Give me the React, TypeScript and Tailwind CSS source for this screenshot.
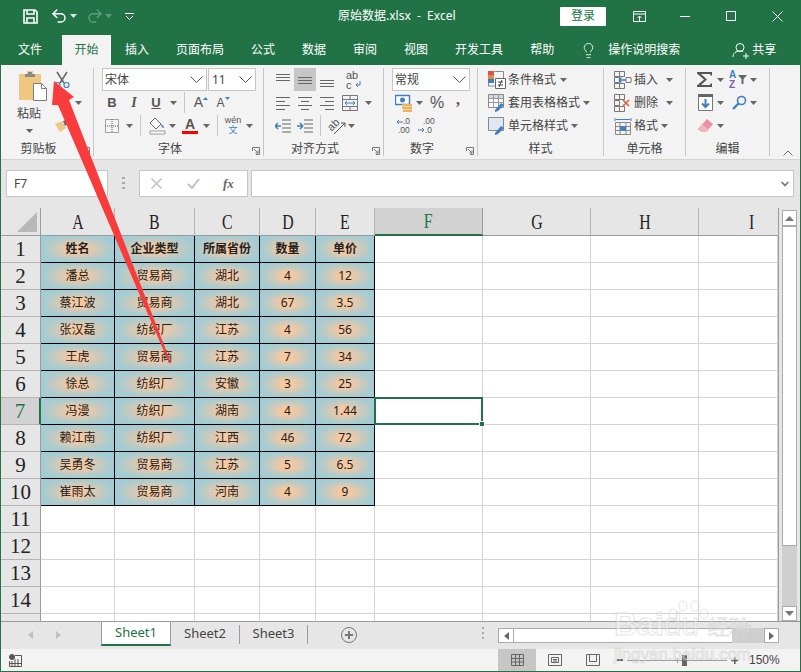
import React from "react";
import { Lightbulb, Redo2, Undo2 } from "lucide-react";

const GRAY = "#666666";
const BLUE = "#3f7fbf";

const Caret = ({ color = GRAY }: { color?: string }) => (
  <svg width="7" height="4" viewBox="0 0 7 4" className="shrink-0">
    <path d="M0 0h7L3.5 4z" fill={color} />
  </svg>
);

const Chevron = () => (
  <svg width="13" height="7" viewBox="0 0 13 7" fill="none" stroke="#555" strokeWidth="1">
    <path d="M.5.5l6 6 6-6" />
  </svg>
);

const Slot = ({ w, children, className = "" }: { w: string; children?: React.ReactNode; className?: string }) => (
  <span className={`flex h-[23px] shrink-0 items-center justify-center ${w} ${className}`}>{children}</span>
);

const Sep = ({ ml }: { ml: string }) => <span className={`h-[21px] w-px shrink-0 bg-[#c6c6c6] ${ml}`} />;

const Row = ({ children }: { children: React.ReactNode }) => <div className="flex h-[23px] items-center">{children}</div>;

const Launcher = () => (
  <svg width="8" height="8" viewBox="0 0 8 8" fill="none" stroke="#777" className="absolute right-[3px] top-[10px]">
    <path d="M.5 4V.5H7.5V7.5H4M2 2l4 4M6 3.5V6H3.5" />
  </svg>
);

function Group(props: { w: string; label: string; launcher?: boolean; children: React.ReactNode }) {
  return (
    <div className={`flex shrink-0 flex-col pt-[3px] ${props.w}`}>
      <div className="h-[69px]">{props.children}</div>
      <div className={`relative h-[22px] text-center text-[12px] leading-[23px] text-[#444] ${props.launcher ? "pr-[17px]" : ""}`}>
        {props.label}
        {props.launcher && <Launcher />}
      </div>
    </div>
  );
}

const GroupLine = () => <span className="my-[3px] w-px shrink-0 bg-[#c6c6c6]" />;

const Lines = ({ rows }: { rows: [number, number, number][] }) => (
  <svg width="16" height="16" viewBox="0 0 16 16" stroke={GRAY}>
    {rows.map((r, i) => (
      <path key={i} d={`M${r[0]} ${r[2] + 0.5}H${r[1]}`} />
    ))}
  </svg>
);

const SaveIcon = () => (
  <svg width="15" height="15" viewBox="0 0 15 15" fill="none" stroke="#fff" strokeWidth="1.6">
    <path d="M1 1h11l2 2v11H1z" />
    <path d="M4 1v4h7V1M4 14V9h7v5" />
  </svg>
);

const PasteIcon = () => (
  <svg width="30" height="31" viewBox="0 0 30 31">
    <path d="M1 4h8V1h6v3h8v26H1z" fill="#efc77e" />
    <path d="M7 4h10v3H7z" fill="#8a8a8a" />
    <path d="M10 2h4v3h-4z" fill="#8a8a8a" />
    <path d="M15.500 13.500h8l5 5v12h-13z" fill="#fff" stroke="#7c7c7c" />
    <path d="M23.500 13.500v5h5" fill="none" stroke="#7c7c7c" />
  </svg>
);

const CutIcon = () => (
  <svg width="16" height="18" viewBox="0 0 16 18" fill="none">
    <path d="M3 1l7 11M13 1L6 12" stroke="#6a6a6a" strokeWidth="1.6" />
    <circle cx="3.500" cy="14" r="2.500" stroke={BLUE} strokeWidth="1.2" />
    <circle cx="12.500" cy="14" r="2.500" stroke={BLUE} strokeWidth="1.2" />
  </svg>
);

const PainterIcon = () => (
  <svg width="16" height="14" viewBox="0 0 16 14">
    <path d="M1 5l7-3 4 7-6 4z" fill="#eec88a" />
    <path d="M9 2l5-2 2 3-5 4z" fill="#666" />
  </svg>
);

const BorderIcon = () => (
  <svg width="14" height="14" viewBox="0 0 14 14" fill="none" stroke="#555" strokeDasharray="1 1">
    <path d="M.5.5h13v13H.5zM7 0v14M0 7h14" />
  </svg>
);

const FillIcon = () => (
  <svg width="17" height="18" viewBox="0 0 17 18">
    <path d="M6 1l6 6-5 5-6-6z" fill="#fff" stroke="#666" />
    <path d="M12 7c2 1 3 3 3 4-2 0-3-2-3-4z" fill={BLUE} />
    <path d="M1 14h15v3H1z" fill="#fff" stroke="#999" />
  </svg>
);

const WrapIcon = () => (
  <svg width="20" height="20" viewBox="0 0 20 20" fill="#555" fontFamily="Liberation Sans" fontSize="11">
    <text x="1" y="9">ab</text>
    <text x="1" y="19">c</text>
    <path d="M15 11v4h-4M11 15l2-2M11 15l2 2" fill="none" stroke={BLUE} />
  </svg>
);

const MergeIcon = () => (
  <svg width="16" height="16" viewBox="0 0 16 16" fill="none">
    <path d="M.5.500h15v15H.5zM0 4.500h16M0 11.500h16M8 0v4M8 12v4" stroke="#777" />
    <path d="M3 8h10M3 8l2-2M3 8l2 2M13 8l-2-2M13 8l-2 2" stroke={BLUE} />
  </svg>
);

const IndentIcon = () => (
  <svg width="16" height="14" viewBox="0 0 16 14" fill="none">
    <path d="M7 1h9M7 5h9M7 9h9M7 13h9" stroke={GRAY} />
    <path d="M0 7h6M0 7l3-3M0 7l3 3" stroke={BLUE} strokeWidth="1.500" />
  </svg>
);

const OrientIcon = () => (
  <svg width="20" height="20" viewBox="0 0 20 20" fontFamily="Liberation Sans" fontSize="11" fill="#555">
    <text x="2" y="13" transform="rotate(-45 7 10)">ab</text>
    <path d="M8 18L19 7M15 7h4v4" fill="none" stroke="#555" />
  </svg>
);

const CurrencyIcon = () => (
  <svg width="18" height="18" viewBox="0 0 18 18">
    <path d="M.5 1.500h14v9H.5z" fill="#fff" stroke={BLUE} strokeWidth="1.400" />
    <circle cx="7.500" cy="6" r="2.500" fill={BLUE} />
    <path d="M7 10h10v2.500H7zM7 13h10v2H7zM8 15.500h9V18H8z" fill="#e9b45f" />
  </svg>
);

const DecIcon = ({ top, bottom, left }: { top: string; bottom: string; left?: boolean }) => (
  <svg width="20" height="18" viewBox="0 0 20 18" fontFamily="Liberation Sans" fontSize="8.500" fill="#555">
    <text x={left ? 8 : 6} y="7">{top}</text>
    <text x={left ? 3 : 8} y="16">{bottom}</text>
    {left ? (
      <path d="M2 5h6M2 5l2-2M2 5l2 2" fill="none" stroke={BLUE} />
    ) : (
      <path d="M1 13h6M7 13l-2-2M7 13l-2 2" fill="none" stroke={BLUE} />
    )}
  </svg>
);

const CondIcon = () => (
  <svg width="18" height="18" viewBox="0 0 18 18">
    <path d="M0 0h6v4H0z" fill="#d9534a" />
    <path d="M0 4h6v4H0z" fill="#e58a3a" />
    <path d="M0 8h6v4H0z" fill={BLUE} />
    <path d="M6.500.5h9v7M.5 12v3h6" fill="none" stroke="#888" />
    <path d="M7.500 7.500h10v10h-10z" fill="#fff" stroke="#666" />
    <path d="M10 11h5M10 14h5M14 9l-3 7" stroke="#444" fill="none" />
  </svg>
);

const TableIcon = ({ plain }: { plain?: boolean }) => (
  <svg width="18" height="18" viewBox="0 0 18 18" fill="none">
    <path d="M.5.500h15v13H.5z" fill={plain ? "#dfe7f2" : "#fff"} stroke="#888" />
    {!plain && <path d="M1 1h14v3.500H1z" fill="#cfd8e4" />}
    {!plain && <path d="M5.500 1v13M10.500 1v13M1 4.500h14M1 8.500h14" stroke="#999" />}
    <path d="M7 16l6-7 3 2-6 6-3 1z" fill={BLUE} />
  </svg>
);

const CellBoxes = ({ children }: { children?: React.ReactNode }) => (
  <svg width="18" height="18" viewBox="0 0 18 18" fill="none">
    <path d="M.5.500h5v5h-5zM5.500.5h5v5h-5zM.5 12.500h5v5h-5zM5.500 12.500h5v5h-5zM.5 6.500h5v5h-5z" stroke="#777" />
    {children}
  </svg>
);

const FormatIcon = () => (
  <svg width="18" height="18" viewBox="0 0 18 18" fill="none">
    <path d="M1 1v3M17 1v3M2 2.500h14" stroke={BLUE} />
    <path d="M1.500 5.500h15v12h-15zM6 6v11M12 6v11M2 9.500h14M2 13.500h14" stroke="#888" />
    <path d="M6 9.500h6v4H6z" fill={BLUE} />
  </svg>
);

const SigmaIcon = () => (
  <svg width="16" height="15" viewBox="0 0 16 15" fill="#555">
    <path d="M0 0h15v3.500h-1.500L13 2H4l6 5.500L4 13h9l.5-1.500H15V15H0v-1.500L7 7.500 0 1.500z" />
  </svg>
);

const SortIcon = () => (
  <svg width="20" height="19" viewBox="0 0 20 19" fontFamily="Liberation Sans" fontWeight="700" fontSize="10">
    <text x="0" y="8" fill={BLUE}>A</text>
    <text x="0" y="18" fill="#8a57b5">Z</text>
    <path d="M9 5h9l-3.500 4v5h-2V9z" fill="#666" />
  </svg>
);

const FillDownIcon = () => (
  <svg width="15" height="17" viewBox="0 0 15 17">
    <path d="M.5.500h14v16H.5z" fill="#fff" stroke="#777" />
    <path d="M0 0h15v3H0z" fill="#666" />
    <path d="M7.500 5v8M4 9.500l3.500 3.500L11 9.500" fill="none" stroke={BLUE} strokeWidth="2" />
  </svg>
);

const SearchIcon = () => (
  <svg width="15" height="15" viewBox="0 0 15 15" fill="none" stroke={BLUE}>
    <circle cx="9.500" cy="5.500" r="4" strokeWidth="1.600" />
    <path d="M6.500 8.500L1 14" strokeWidth="2.400" />
  </svg>
);

const EraserIcon = () => (
  <svg width="15" height="14" viewBox="0 0 15 14">
    <path d="M9 0l6 5-6 7-3 1-4-1-2-2z" fill="#ec8f9e" />
    <path d="M0 10l4-5 6 5-3 3-4-.5z" fill="#f3b3bd" />
  </svg>
);

const colWidths = ["w-[40px]", "w-[74px]", "w-[80px]", "w-[65px]", "w-[56px]", "w-[59px]", "w-[108px]", "w-[108px]", "w-[108px]", "w-[79px]"];
const colNames = ["A", "B", "C", "D", "E", "F", "G", "H", "I"];

const tableRows = [
  ["姓名", "企业类型", "所属省份", "数量", "单价"],
  ["潘总", "贸易商", "湖北", "4", "12"],
  ["蔡江波", "贸易商", "湖北", "67", "3.5"],
  ["张汉磊", "纺织厂", "江苏", "4", "56"],
  ["王虎", "贸易商", "江苏", "7", "34"],
  ["徐总", "纺织厂", "安徽", "3", "25"],
  ["冯漫", "纺织厂", "湖南", "4", "1.44"],
  ["赖江南", "纺织厂", "江西", "46", "72"],
  ["吴勇冬", "贸易商", "江苏", "5", "6.5"],
  ["崔雨太", "贸易商", "河南", "4", "9"],
];

const rowNumbers = [1, 2, 3, 4, 5, 6, 7, 8, 9, 10, 11, 12, 13, 14, 15];

function SheetRow({ n }: { n: number }) {
  const data = tableRows[n - 1];
  const selected = n === 7;
  return (
    <div className="flex h-[27px] shrink-0">
      <div
        className={`flex items-center justify-center border-b border-b-[#b4b4b4] font-['Liberation_Serif',serif] text-[21px] leading-none ${colWidths[0]} ${
          selected ? "border-r-2 border-r-[#217346] bg-[#d2d2d2] text-[#217346]" : "border-r border-r-[#9b9b9b] bg-[#e6e6e6] text-[#222]"
        }`}
      >
        {n < 15 ? n : ""}
      </div>
      {colNames.map((c, i) => {
        const text = data ? data[i] : undefined;
        if (text !== undefined) {
          return (
            <div
              key={c}
              className={`flex items-center justify-center border-b border-r border-black bg-[#f8c8a0] bg-[linear-gradient(90deg,#9fccd6,#9fccd600_42%,#9fccd600_58%,#9fccd6),linear-gradient(180deg,#9fccd6,#9fccd600_38%,#9fccd600_62%,#9fccd6)] text-[12px] text-[#222] ${colWidths[i + 1]} ${
                n === 1 ? "font-bold" : ""
              }`}
            >
              {text}
            </div>
          );
        }
        return (
          <div key={c} className={`relative border-b border-r border-[#d4d4d4] bg-white ${colWidths[i + 1]}`}>
            {selected && c === "F" && (
              <div className="absolute -left-px -top-px bottom-[-1px] right-[-1px] z-10 border-2 border-[#217346]">
                <span className="absolute -bottom-[4px] -right-[4px] h-[6px] w-[6px] border border-white bg-[#217346]" />
              </div>
            )}
          </div>
        );
      })}
    </div>
  );
}

export default function App() {
  return (
    <div className="relative flex h-[672px] w-[801px] flex-col overflow-hidden border-x border-b border-[#217346] bg-[#f3f3f3] font-['Noto_Sans','Noto_Sans_CJK_SC',sans-serif]">
      {/* title bar */}
      <div className="flex h-[32px] shrink-0 items-center bg-[#217346] text-white">
        <span className="ml-[22px] w-[15px]"><SaveIcon /></span>
        <Undo2 size={18} strokeWidth={2} className="ml-[12px]" />
        <span className="ml-[2px]"><Caret color="#d8e8df" /></span>
        <Redo2 size={18} strokeWidth={2} color="#5d9c7c" className="ml-[9px]" />
        <span className="ml-[1px]"><Caret color="#5d9c7c" /></span>
        <svg width="9" height="7" viewBox="0 0 9 7" className="ml-[13px]" fill="none" stroke="#fff">
          <path d="M0 .5h9M1 3l3.500 3.500L8 3" />
        </svg>
        <span className="ml-[204px] w-[122px] shrink-0 whitespace-nowrap text-[12px]">原始数据.xlsx&nbsp; -&nbsp; Excel</span>
        <span className="ml-[100px] flex h-[19px] w-[46px] shrink-0 items-center justify-center rounded-[1px] bg-white text-[12px] text-[#217346]">登录</span>
        <span className="ml-[10px] flex w-[46px] shrink-0 justify-center">
          <svg width="13" height="11" viewBox="0 0 13 11" fill="none" stroke="#fff">
            <path d="M.5.500h12v10H.5zM0 3h13M6.500 10V5M4.500 7l2-2 2 2" />
          </svg>
        </span>
        <span className="flex w-[46px] shrink-0 justify-center"><span className="h-px w-[10px] bg-white" /></span>
        <span className="flex w-[46px] shrink-0 justify-center"><span className="h-[10px] w-[10px] border border-white" /></span>
        <span className="flex w-[46px] shrink-0 justify-center">
          <svg width="11" height="11" viewBox="0 0 11 11" stroke="#fff"><path d="M.5.5l10 10M10.500.5l-10 10" /></svg>
        </span>
      </div>

      {/* tabs */}
      <div className="flex h-[33px] shrink-0 items-end gap-px bg-[#217346] pl-[4px] text-[12px] leading-[29px] text-white">
        <span className="mr-[6px] h-[30px] px-[13px]">文件</span>
        <span className="h-[30px] w-[49px] bg-[#f3f3f3] text-center text-[#217346]">开始</span>
        <span className="h-[30px] px-[13px]">插入</span>
        <span className="h-[30px] px-[13px]">页面布局</span>
        <span className="h-[30px] px-[13px]">公式</span>
        <span className="h-[30px] px-[13px]">数据</span>
        <span className="h-[30px] px-[13px]">审阅</span>
        <span className="h-[30px] px-[13px]">视图</span>
        <span className="h-[30px] px-[13px]">开发工具</span>
        <span className="h-[30px] px-[13px]">帮助</span>
        <Lightbulb size={17} strokeWidth={1.2} className="mb-[6px] ml-[12px]" />
        <span className="ml-[10px] h-[30px]">操作说明搜索</span>
        <svg width="17" height="17" viewBox="0 0 17 17" fill="none" stroke="#fff" className="mb-[6px] ml-[51px]">
          <circle cx="8" cy="5.500" r="4" />
          <path d="M1 15c0-4 3-6 7-6 1 0 2 .2 3 .6M11 14h6M14 11v6" />
        </svg>
        <span className="ml-[2px] h-[30px]">共享</span>
      </div>

      {/* ribbon */}
      <div className="flex h-[95px] shrink-0 border-b border-[#d4d4d4] text-[#444]">
        <Group w="w-[92px]" label="剪贴板" launcher>
          <div className="flex">
            <div className="ml-[6px] flex w-[44px] flex-col items-center pt-[2px]">
              <span className="ml-[7px] block h-[33px]"><PasteIcon /></span>
              <span className="mt-[2px] text-[12px] leading-[18px]">粘贴</span>
              <span className="mt-[6px]"><Caret /></span>
            </div>
            <div className="flex flex-col">
              <Slot w="w-[22px]"><CutIcon /></Slot>
              <Row><Slot w="w-[22px]" /><span className="ml-[2px]"><Caret /></span></Row>
              <Slot w="w-[22px]"><PainterIcon /></Slot>
            </div>
          </div>
        </Group>
        <GroupLine />
        <Group w="w-[169px]" label="字体" launcher>
          <Row>
            <div className="ml-[8px] flex h-[23px] w-[105px] items-center justify-between border border-[#c6c6c6] bg-white pl-[2px] pr-[3px] text-[12px]">
              宋体<Chevron />
            </div>
            <div className="ml-px flex h-[23px] w-[48px] items-center justify-between border border-[#c6c6c6] bg-white pl-[3px] pr-[3px] text-[12px]">
              11<Chevron />
            </div>
          </Row>
          <Row>
            <Slot w="w-[22px]" className="ml-[7px] font-['Liberation_Sans',sans-serif] text-[13px] font-bold text-[#555]">B</Slot>
            <Slot w="w-[22px]" className="font-['Liberation_Serif',serif] text-[14px] font-bold italic text-[#555]">I</Slot>
            <Slot w="w-[22px]" className="font-['Liberation_Sans',sans-serif] text-[13px] font-bold text-[#555] underline">U</Slot>
            <Slot w="w-[12px]"><Caret /></Slot>
            <Sep ml="ml-[5px]" />
            <Slot w="w-[22px]" className="ml-[5px] font-['Liberation_Sans',sans-serif] text-[14px] text-[#555]">
              A<svg width="5" height="3" viewBox="0 0 5 3" className="mb-[9px]"><path d="M0 3h5L2.500 0z" fill={BLUE} /></svg>
            </Slot>
            <Slot w="w-[22px]" className="font-['Liberation_Sans',sans-serif] text-[12px] text-[#555]">
              A<svg width="5" height="3" viewBox="0 0 5 3" className="mb-[9px]"><path d="M0 0h5L2.500 3z" fill={BLUE} /></svg>
            </Slot>
          </Row>
          <Row>
            <Slot w="w-[22px]" className="ml-[7px]"><BorderIcon /></Slot>
            <Slot w="w-[12px]"><Caret /></Slot>
            <Sep ml="ml-[5px]" />
            <Slot w="w-[20px]" className="ml-[6px]"><FillIcon /></Slot>
            <Slot w="w-[10px]"><Caret /></Slot>
            <Slot w="w-[22px]" className="ml-[2px]">
              <span className="flex flex-col items-center">
                <span className="font-['Liberation_Sans',sans-serif] text-[14px] font-bold leading-[14px] text-[#555]">A</span>
                <span className="h-[3px] w-[16px] bg-[#ff0000]" />
              </span>
            </Slot>
            <Slot w="w-[10px]"><Caret /></Slot>
            <Sep ml="ml-[6px]" />
            <Slot w="w-[22px]" className="ml-[4px]">
              <span className="flex flex-col items-center">
                <span className="h-[9px] font-['Liberation_Sans',sans-serif] text-[9px] leading-[9px] text-[#555]">wén</span>
                <span className="h-[10px] text-[9px] leading-[10px] text-[#3f7fbf]">文</span>
              </span>
            </Slot>
            <Slot w="w-[10px]"><Caret /></Slot>
          </Row>
        </Group>
        <GroupLine />
        <Group w="w-[119px]" label="对齐方式" launcher>
          <Row>
            <Slot w="w-[22px]" className="ml-[8px]"><Lines rows={[[1, 15, 2], [1, 15, 5], [1, 15, 8]]} /></Slot>
            <Slot w="w-[22px]" className="bg-[#c6c6c6]"><Lines rows={[[1, 15, 5], [1, 15, 8], [1, 15, 11]]} /></Slot>
            <Slot w="w-[22px]"><Lines rows={[[1, 15, 8], [1, 15, 11], [1, 15, 14]]} /></Slot>
            <Slot w="w-[22px]" className="ml-[6px]"><WrapIcon /></Slot>
          </Row>
          <Row>
            <Slot w="w-[22px]" className="ml-[8px]"><Lines rows={[[1, 15, 2], [1, 10, 6], [1, 15, 10], [1, 10, 14]]} /></Slot>
            <Slot w="w-[22px]"><Lines rows={[[1, 15, 2], [4, 12, 6], [1, 15, 10], [4, 12, 14]]} /></Slot>
            <Slot w="w-[22px]"><Lines rows={[[1, 15, 2], [6, 15, 6], [1, 15, 10], [6, 15, 14]]} /></Slot>
            <Slot w="w-[22px]" className="ml-px"><MergeIcon /></Slot>
            <Slot w="w-[12px]" className="ml-px"><Caret /></Slot>
          </Row>
          <Row>
            <Slot w="w-[22px]" className="ml-[8px]"><IndentIcon /></Slot>
            <Slot w="w-[22px]">
              <svg width="16" height="14" viewBox="0 0 16 14" fill="none">
                <path d="M7 1h9M7 5h9M7 9h9M7 13h9" stroke={GRAY} />
                <path d="M0 7h6M6 7L3 4M6 7l-3 3" stroke={BLUE} strokeWidth="1.500" />
              </svg>
            </Slot>
            <Sep ml="ml-[4px]" />
            <Slot w="w-[22px]" className="ml-[4px]"><OrientIcon /></Slot>
            <Slot w="w-[8px]"><Caret /></Slot>
          </Row>
        </Group>
        <GroupLine />
        <Group w="w-[93px]" label="数字" launcher>
          <Row>
            <div className="ml-[8px] flex h-[23px] w-[78px] items-center justify-between border border-[#c6c6c6] bg-white pl-[2px] pr-[3px] text-[12px]">
              常规<Chevron />
            </div>
          </Row>
          <Row>
            <Slot w="w-[20px]" className="ml-[10px]"><CurrencyIcon /></Slot>
            <Slot w="w-[10px]"><Caret /></Slot>
            <Slot w="w-[20px]" className="ml-[3px] font-['Liberation_Sans',sans-serif] text-[16px] text-[#555]">%</Slot>
            <Slot w="w-[20px]" className="ml-px pb-[6px] font-['Liberation_Serif',serif] text-[16px] font-bold text-[#555]">,</Slot>
          </Row>
          <Row>
            <Slot w="w-[22px]" className="ml-[10px]"><DecIcon top=".0" bottom=".00" left /></Slot>
            <Slot w="w-[22px]"><DecIcon top=".00" bottom=".0" /></Slot>
          </Row>
        </Group>
        <GroupLine />
        <Group w="w-[125px]" label="样式">
          <Row>
            <Slot w="w-[22px]" className="ml-[8px]"><CondIcon /></Slot>
            <span className="text-[12px]">条件格式</span>
            <span className="ml-[4px]"><Caret /></span>
          </Row>
          <Row>
            <Slot w="w-[22px]" className="ml-[8px]"><TableIcon /></Slot>
            <span className="text-[12px]">套用表格格式</span>
            <span className="ml-[3px]"><Caret /></span>
          </Row>
          <Row>
            <Slot w="w-[22px]" className="ml-[8px]"><TableIcon plain /></Slot>
            <span className="text-[12px]">单元格样式</span>
            <span className="ml-[3px]"><Caret /></span>
          </Row>
        </Group>
        <GroupLine />
        <Group w="w-[81px]" label="单元格">
          <Row>
            <Slot w="w-[22px]" className="ml-[8px]">
              <CellBoxes><path d="M12 6.500h5v5h-5z" stroke="#777" /><path d="M5 9h7M5 9l2.500-2.500M5 9l2.500 2.500" stroke={BLUE} strokeWidth="1.400" /></CellBoxes>
            </Slot>
            <span className="text-[12px]">插入</span>
            <span className="ml-[8px]"><Caret /></span>
          </Row>
          <Row>
            <Slot w="w-[22px]" className="ml-[8px]">
              <CellBoxes><path d="M9 6l6 6M15 6l-6 6" stroke="#e0603a" strokeWidth="1.600" /></CellBoxes>
            </Slot>
            <span className="text-[12px]">删除</span>
            <span className="ml-[8px]"><Caret /></span>
          </Row>
          <Row>
            <Slot w="w-[22px]" className="ml-[8px]"><FormatIcon /></Slot>
            <span className="text-[12px]">格式</span>
            <span className="ml-[3px]"><Caret /></span>
          </Row>
        </Group>
        <GroupLine />
        <Group w="w-[83px]" label="编辑">
          <Row>
            <Slot w="w-[22px]" className="ml-[8px]"><SigmaIcon /></Slot>
            <span className="ml-px"><Caret /></span>
            <Slot w="w-[20px]" className="ml-[5px]"><SortIcon /></Slot>
            <span className="ml-px"><Caret /></span>
          </Row>
          <Row>
            <Slot w="w-[22px]" className="ml-[8px]"><FillDownIcon /></Slot>
            <span className="ml-px"><Caret /></span>
            <Slot w="w-[20px]" className="ml-[5px]"><SearchIcon /></Slot>
            <span className="ml-px"><Caret /></span>
          </Row>
          <Row>
            <Slot w="w-[22px]" className="ml-[8px]"><EraserIcon /></Slot>
            <span className="ml-px"><Caret /></span>
          </Row>
        </Group>
        <GroupLine />
        <div className="flex flex-1 items-end justify-end pb-[3px] pr-[7px]">
          <svg width="10" height="6" viewBox="0 0 10 6" fill="none" stroke="#666"><path d="M.5 5.500L5 1l4.500 4.500" /></svg>
        </div>
      </div>

      {/* formula bar */}
      <div className="flex h-[48px] shrink-0 items-start bg-[#e6e6e6] pt-[10px]">
        <div className="ml-[5px] flex h-[27px] w-[102px] items-center border border-[#c6c6c6] bg-white pl-[7px] text-[12px] text-[#444]">F7</div>
        <div className="ml-[14px] mt-[7px] flex w-[3px] flex-col gap-[3px]">
          <span className="h-[2px] bg-[#aaa]" />
          <span className="h-[2px] bg-[#aaa]" />
          <span className="h-[2px] bg-[#aaa]" />
        </div>
        <div className="ml-[14px] flex h-[27px] w-[109px] items-center border border-[#c6c6c6] bg-white">
          <svg width="11" height="11" viewBox="0 0 11 11" stroke="#c0c0c0" strokeWidth="1.500" className="ml-[11px]"><path d="M.5.5l10 10M10.500.5l-10 10" /></svg>
          <svg width="13" height="11" viewBox="0 0 13 11" fill="none" stroke="#c0c0c0" strokeWidth="2" className="ml-[25px]"><path d="M1 6l4 4 7-9" /></svg>
          <span className="ml-[23px] font-['Liberation_Serif',serif] text-[13px] font-bold italic text-[#666]">fx</span>
        </div>
        <div className="ml-[3px] flex h-[27px] w-[543px] items-center justify-end border border-[#c6c6c6] bg-white pr-[4px]">
          <svg width="8" height="6" viewBox="0 0 8 6" fill="none" stroke="#777" strokeWidth="1.800"><path d="M.7 1L4 4.500 7.300 1" /></svg>
        </div>
      </div>

      {/* sheet */}
      <div className="flex h-[413px] shrink-0">
        <div className="flex w-[778px] shrink-0 flex-col overflow-hidden border-r border-[#9b9b9b]">
          <div className="flex h-[28px] shrink-0 bg-[#e6e6e6]">
            <div className={`flex items-end justify-end border-b border-r border-[#9b9b9b] pb-[3px] pr-[3px] ${colWidths[0]}`}>
              <svg width="20" height="20" viewBox="0 0 20 20"><path d="M20 0v20H0z" fill="#b8b8b8" /></svg>
            </div>
            {colNames.map((c, i) => (
              <div
                key={c}
                className={`flex items-center font-['Liberation_Serif',serif] text-[22px] leading-none ${colWidths[i + 1]} ${
                  c === "F"
                    ? "justify-center border-b-2 border-r border-b-[#217346] border-r-[#9b9b9b] bg-[#d2d2d2] text-[#217346]"
                    : c === "I"
                      ? "justify-start border-b border-r-0 border-b-[#9b9b9b] pl-[49px] text-[#222]"
                      : "justify-center border-b border-r border-b-[#9b9b9b] border-r-[#b4b4b4] text-[#222]"
                }`}
              >
                <span className="scale-x-[.72]">{c}</span>
              </div>
            ))}
          </div>
          {rowNumbers.map((n) => (
            <SheetRow key={n} n={n} />
          ))}
        </div>
        <div className="flex flex-1 flex-col bg-[#e6e6e6] pl-[3px] pr-[3px] pt-[2px]">
          <div className="flex h-[16px] w-[15px] shrink-0 items-center justify-center border border-[#ababab] bg-white">
            <svg width="9" height="5" viewBox="0 0 9 5"><path d="M0 5h9L4.500 0z" fill="#777" /></svg>
          </div>
          <div className="flex w-[15px] flex-1 flex-col bg-[#cfcfcf]">
            <div className="h-[320px] border border-[#ababab] bg-white" />
          </div>
          <div className="flex h-[15px] w-[15px] shrink-0 items-center justify-center border border-[#ababab] bg-white">
            <svg width="9" height="5" viewBox="0 0 9 5"><path d="M0 0h9L4.500 5z" fill="#777" /></svg>
          </div>
        </div>
      </div>

      {/* sheet tabs */}
      <div className="flex h-[28px] shrink-0 border-t border-[#9b9b9b] bg-[#e6e6e6] text-[13px] text-[#444]">
        <div className="flex w-[100px] shrink-0 items-center pb-[2px]">
          <svg width="5" height="8" viewBox="0 0 5 8" className="ml-[27px]"><path d="M5 0v8L0 4z" fill="#c0c0c0" /></svg>
          <svg width="5" height="8" viewBox="0 0 5 8" className="ml-[23px]"><path d="M0 0v8l5-4z" fill="#c0c0c0" /></svg>
        </div>
        <div className="flex h-[24px] w-[70px] shrink-0 items-center justify-center border-x border-b-2 border-x-[#9b9b9b] border-b-[#217346] bg-white text-[#217346]">Sheet1</div>
        <div className="flex h-[24px] w-[68px] shrink-0 items-center justify-center">Sheet2</div>
        <span className="mt-[3px] h-[19px] w-px bg-[#9b9b9b]" />
        <div className="flex h-[24px] w-[67px] shrink-0 items-center justify-center">Sheet3</div>
        <span className="mt-[3px] h-[19px] w-px bg-[#9b9b9b]" />
        <svg width="16" height="16" viewBox="0 0 16 16" fill="none" stroke="#777" className="ml-[33px] mt-[5px]">
          <circle cx="8" cy="8" r="7.500" />
          <path d="M8 4v8M4 8h8" strokeWidth="2" />
        </svg>
        <div className="ml-[125px] mt-[5px] flex w-[2px] flex-col gap-[3px]">
          <span className="h-[2px] bg-[#aaa]" />
          <span className="h-[2px] bg-[#aaa]" />
          <span className="h-[2px] bg-[#aaa]" />
        </div>
        <div className="ml-[14px] mt-[6px] flex h-[15px] w-[281px] shrink-0 bg-[#cfcfcf]">
          <div className="flex w-[16px] items-center justify-center border border-[#ababab] bg-white">
            <svg width="5" height="8" viewBox="0 0 5 8"><path d="M5 0v8L0 4z" fill="#666" /></svg>
          </div>
          <div className="w-[218px] border-y border-[#ababab] bg-white" />
          <div className="flex-1" />
          <div className="flex w-[15px] items-center justify-center border border-[#ababab] bg-white">
            <svg width="5" height="8" viewBox="0 0 5 8"><path d="M0 0v8l5-4z" fill="#666" /></svg>
          </div>
        </div>
      </div>

      {/* status bar */}
      <div className="flex h-[22px] shrink-0 items-center bg-[#f3f3f3] text-[13px] text-[#444]">
        <svg width="13" height="13" viewBox="0 0 13 13" className="ml-[8px]" fill="none" stroke="#555">
          <circle cx="3" cy="3" r="2.500" fill="#555" />
          <path d="M6 1.500h6.500v11H.5V7M3 7v5.500M6 5v7.500M9 5v7.500M.5 9.500h12" />
        </svg>
        <div className="ml-[476px] flex h-[22px] w-[38px] shrink-0 items-center justify-center bg-[#c6c6c6]">
          <svg width="13" height="12" viewBox="0 0 13 12" fill="none" stroke="#666"><path d="M.5.500h12v11H.5zM4.500 0v12M8.500 0v12M0 4.500h13M0 8h13" /></svg>
        </div>
        <div className="flex h-[22px] w-[38px] shrink-0 items-center justify-center">
          <svg width="14" height="12" viewBox="0 0 14 12" fill="none" stroke="#666"><path d="M.5.500h13v11H.5zM3.500 3.500h7v5h-7zM5 5.500h4M5 7h4" /></svg>
        </div>
        <div className="flex h-[22px] w-[38px] shrink-0 items-center justify-center">
          <svg width="14" height="12" viewBox="0 0 14 12" fill="none" stroke="#666"><path d="M.5.500h13v11H.5zM3.500 1v6.500h7V1" /></svg>
        </div>
        <span className="ml-[5px] h-[2px] w-[6px] bg-[#555]" />
        <div className="relative ml-[4px] h-px w-[100px] bg-[#9b9b9b]">
          <span className="absolute -top-[2px] left-[50px] h-[5px] w-px bg-[#9b9b9b]" />
          <span className="absolute -top-[5px] left-[55px] h-[11px] w-[5px] bg-[#666]" />
        </div>
        <svg width="7" height="7" viewBox="0 0 7 7" className="ml-[4px]"><path d="M3 0h1.500v7H3zM0 2.800h7v1.500H0z" fill="#555" /></svg>
        <span className="ml-[11px] whitespace-nowrap font-['Liberation_Sans',sans-serif] text-[12px]">150%</span>
      </div>

      {/* red arrow drawn on top of the screenshot */}
      <svg width="801" height="672" viewBox="0 0 801 672" className="pointer-events-none absolute -left-px top-0 z-20">
        <path d="M54 81L74 97 69 100 171 363 169 363 58 105 52 105z" fill="#f93b3b" />
      </svg>

      {/* baidu watermark */}
      <div className="pointer-events-none absolute left-[613px] top-[600px] z-20 flex flex-col font-['Liberation_Sans',sans-serif] text-[#ffffff50] [-webkit-text-stroke:1px_#c9c9c980]">
        <svg width="44" height="20" viewBox="0 0 44 20" fill="none" stroke="#c9c9c980" className="ml-[52px]">
          <ellipse cx="7" cy="14" rx="4" ry="5" />
          <ellipse cx="17" cy="6" rx="4" ry="5" />
          <ellipse cx="29" cy="6" rx="4" ry="5" />
          <ellipse cx="38" cy="14" rx="4" ry="5" />
        </svg>
        <span className="-mt-[14px] whitespace-nowrap text-[32px] font-bold leading-[36px]">
          Bai<span className="font-normal">du</span> <span className="text-[22px] font-normal">经验</span>
        </span>
        <span className="whitespace-nowrap text-[17px] leading-[18px]">jingyan.baidu.com</span>
      </div>
    </div>
  );
}
